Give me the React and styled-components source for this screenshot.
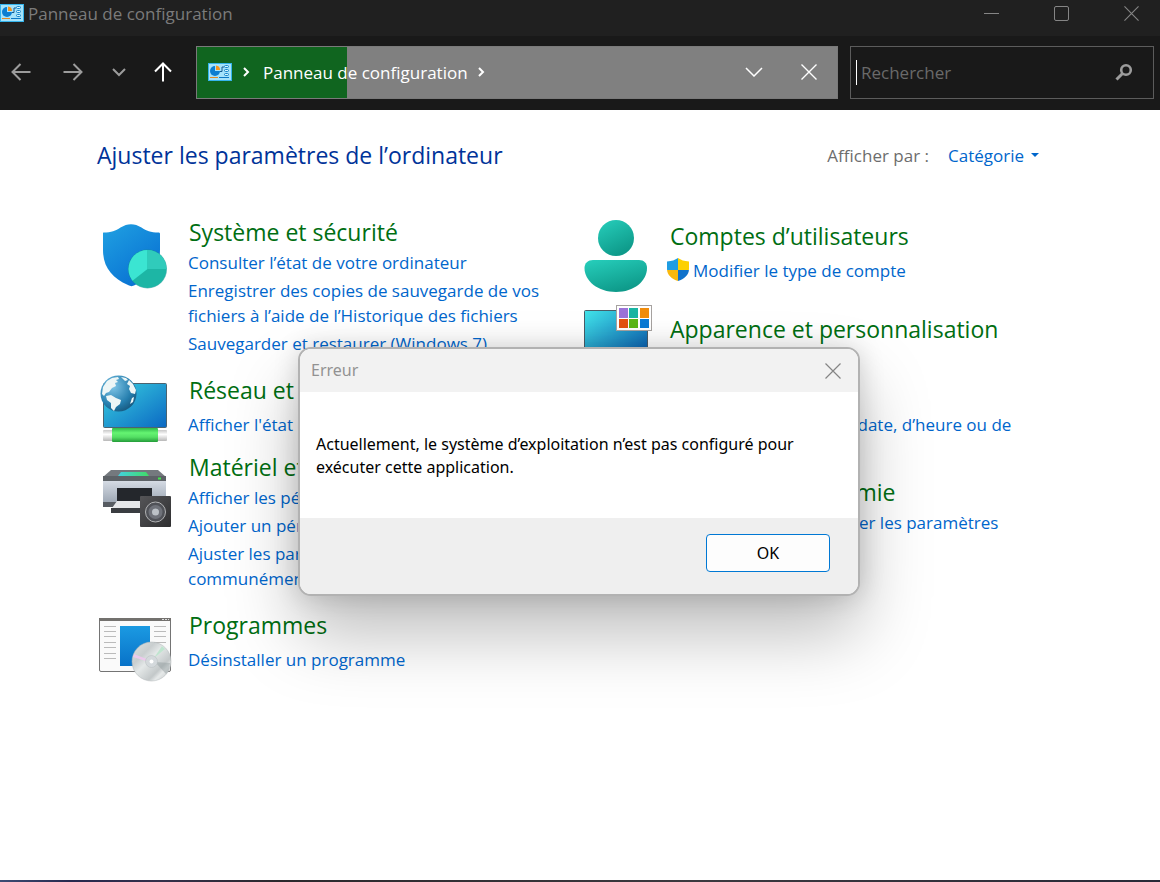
import React from "react";
import styled, { createGlobalStyle } from "styled-components";

const GlobalStyle = createGlobalStyle`
  * { box-sizing: border-box; }
  body {
    margin: 0;
    background: #fff;
    font-family: "Open Sans", "Noto Sans", sans-serif;
    font-size: 17px;
    line-height: 25px;
  }
  button { font: inherit; padding: 0; border: 0; background: none; color: inherit; cursor: pointer; }
  h1, h2, p, ul { margin: 0; padding: 0; font-weight: 400; }
  svg { display: block; flex: none; }
`;

const Window = styled.div`
  position: relative;
  display: flex;
  flex-direction: column;
  min-height: 100vh;
`;

const TitleBar = styled.header`
  display: flex;
  align-items: flex-start;
  height: 36px;
  padding-top: 1px;
  background: #202020;
  color: #7b7b7b;
  svg { margin-top: 3px; }
`;

const WindowTitle = styled.span`
  flex: 1;
  margin-left: 4px;
`;

const WindowButton = styled.button`
  display: flex;
  align-items: center;
  justify-content: center;
  width: 70px;
  height: 25px;
  &:last-child { width: 58px; margin-left: 6px; }
  svg { margin: 0; }
`;

const NavBar = styled.nav`
  display: flex;
  align-items: center;
  height: 74px;
  padding: 0 6px 2px 0;
  background: #191919;
  color: #fff;
`;

const NavButton = styled.button`
  display: flex;
  align-items: center;
  justify-content: center;
  width: ${(p) => p.$width}px;
  height: 40px;
  color: ${(p) => (p.$active ? "#fff" : "#9c9c9c")};
`;

const AddressBar = styled.div`
  display: flex;
  align-items: center;
  flex: 1;
  height: 53px;
  margin-left: 3px;
  padding: 0 8px 0 11px;
  border: 1px solid #7a7a7a;
  background: linear-gradient(to right, #10651f 150px, #808080 150px);
`;

const Crumb = styled.a`
  margin: 0 10px 0 13px;
  color: #fff;
  text-decoration: none;
`;

const Crumbs = styled.div`
  display: flex;
  align-items: center;
  flex: 1;
  > svg:first-child { margin-right: 11px; }
`;

const SearchBox = styled.label`
  display: flex;
  align-items: center;
  width: 304px;
  height: 53px;
  margin-left: 12px;
  padding: 0 20px 0 5px;
  border: 1px solid #5c5c5c;
`;

const Caret = styled.span`
  width: 1px;
  height: 25px;
  background: #fff;
`;

const SearchInput = styled.input`
  flex: 1;
  min-width: 0;
  padding: 0 0 0 4px;
  border: 0;
  outline: 0;
  background: transparent;
  color: #fff;
  font: inherit;
  &::placeholder { color: #6a6a6a; opacity: 1; }
`;

const Content = styled.main`
  flex: 1;
  padding: 29px 99px 60px;
`;

const ContentHeader = styled.div`
  display: flex;
  align-items: center;
  justify-content: space-between;
  height: 32px;
  margin: 0 22px 45px -2px;
`;

const PageTitle = styled.h1`
  color: #003399;
  font-size: 23px;
  line-height: 32px;
`;

const ViewBy = styled.div`
  display: flex;
  align-items: center;
  gap: 19px;
  color: #6d6d6d;
`;

const ViewButton = styled.button`
  display: flex;
  align-items: center;
  gap: 7px;
  color: #0066cc;
`;

const Columns = styled.div`
  display: grid;
  grid-template-columns: 1fr 1fr;
`;

const Category = styled.section`
  display: flex;
  gap: 18px;
  margin-bottom: ${(p) => p.$after}px;
`;

const IconSlot = styled.div`
  flex: none;
  width: 72px;
  padding-top: 1px;
`;

const CategoryText = styled.div`
  padding-top: ${(p) => p.$top || 0}px;
`;

const CategoryTitle = styled.h2`
  font-size: 23px;
  line-height: 32px;
  a { color: #006e12; text-decoration: none; }
`;

const TaskList = styled.ul`
  display: flex;
  flex-direction: column;
  gap: 3px;
  max-width: 360px;
  margin-top: ${(p) => (p.$loose ? 6 : 2)}px;
  margin-left: -1px;
  list-style: none;
`;

const Task = styled.li`
  display: flex;
  gap: 4px;
  margin-left: ${(p) => (p.$shield ? -2 : 0)}px;
  a { color: #0066cc; text-decoration: none; }
`;

const BottomEdge = styled.footer`
  height: 2px;
  background: linear-gradient(to right, #3c4c74, #27294f 6%, #33304a 14%, #2b292d 24%, #3b393f 60%, #292a38);
`;

const Dialog = styled.div`
  position: absolute;
  top: 347px;
  left: 50%;
  width: 562px;
  margin-left: -282px;
  border: 2px solid #b2b2b2;
  border-radius: 13px;
  background: #fff;
  background-clip: padding-box;
  overflow: hidden;
  box-shadow: 0 38px 70px rgba(0, 0, 0, 0.26), 0 0 26px rgba(0, 0, 0, 0.16);
  color: #000;
  font-family: "Noto Sans", "Open Sans", sans-serif;
  font-size: 16px;
  line-height: 23px;
`;

const DialogHeader = styled.div`
  display: flex;
  align-items: center;
  justify-content: space-between;
  height: 43px;
  padding: 0 17px 0 11px;
  background: #f2f2f2;
  color: #929292;
`;

const DialogBody = styled.p`
  padding: 41px 16px 39px;
`;

const DialogFooter = styled.div`
  display: flex;
  justify-content: flex-end;
  height: 76px;
  padding: 16px 28px 22px;
  background: #efefef;
`;

const OkButton = styled.button`
  width: 124px;
  height: 38px;
  border: 1px solid #0078d4;
  border-radius: 4px;
  background: #fdfdfd;
`;

const PanelIcon = () => (
  <svg width="24" height="18" viewBox="0 0 24 18">
    <rect width="24" height="18" fill="#35b4ec" />
    <rect x="1" y="1" width="22" height="16" fill="#a5e3fb" />
    <circle cx="7" cy="8" r="5" fill="#0c7ed0" />
    <path d="M7 8V2h1a5 5 0 0 1 5 6z" fill="#a5e3fb" />
    <path d="M8 2.500a4.500 4.500 0 0 1 4 4.500H8z" fill="#f7941d" />
    <path d="M12 8.500h2V4h2" fill="none" stroke="#14598f" />
    <g fill="#d7f6ff" stroke="#1483c9">
      <rect x="16.500" y="2.500" width="4" height="2" rx="1" />
      <rect x="16.500" y="6.500" width="4" height="2" rx="1" />
      <rect x="16.500" y="10.500" width="4" height="2" rx="1" />
    </g>
    <path d="M2 14.500h8" stroke="#e28a24" />
    <path d="M11 14.500h10" stroke="#0c78c4" />
  </svg>
);

const Cross = ({ size = 16, color = "currentColor", width = 1.2 }) => (
  <svg width={size} height={size} viewBox="0 0 16 16" stroke={color} strokeWidth={width}>
    <path d="M.5.5l15 15M15.500.5l-15 15" />
  </svg>
);

const Arrow = ({ turn = 0 }) => (
  <svg width="20" height="20" viewBox="0 0 20 20" fill="none" stroke="currentColor" strokeWidth="2">
    <path transform={`rotate(${turn} 10 10)`} d="M19.500 10H2M9.500 2L1.500 10l8 8" />
  </svg>
);

const CrumbChevron = () => (
  <svg width="7" height="10" viewBox="0 0 7 10" fill="none" stroke="#fff" strokeWidth="2">
    <path d="M1 1l4 4-4 4" />
  </svg>
);

const ShieldIcon = () => (
  <svg width="72" height="73" viewBox="0 1 72 73">
    <defs>
      <linearGradient id="sh" x2=".7" y2="1"><stop stopColor="#20a1e2" /><stop offset="1" stopColor="#0870d2" /></linearGradient>
      <clipPath id="pie"><circle cx="48.500" cy="53" r="19" /></clipPath>
    </defs>
    <path d="M4.500 16.500c8 0 12-1.500 17-5 7-4.500 14-4.500 21 0 5 3.500 9 5 17 5 1 0 1.500.5 1.500 1.500v16c0 17-10 28-25 35-3 1.500-4 1.500-7 0C13 62 4 51 4 34V18c0-1-.2-1.500.5-1.500z" fill="url(#sh)" />
    <circle cx="48.500" cy="53" r="19.500" fill="#168c90" opacity=".55" />
    <g clipPath="url(#pie)">
      <path d="M29 33h39v40H29z" fill="#1db6a5" />
      <path d="M48.500 53V33H28v36z" fill="#3be5d2" />
      <path d="M48.500 53V33H70v20z" fill="#30cbbb" />
    </g>
  </svg>
);

const NetworkIcon = () => (
  <svg width="72" height="69" viewBox="0 1 72 69">
    <defs>
      <linearGradient id="net" x2="1" y2="1"><stop stopColor="#39d0e0" /><stop offset="1" stopColor="#0b68c3" /></linearGradient>
      <radialGradient id="glb" cx=".35" cy=".3" r=".8"><stop stopColor="#80c6e7" /><stop offset=".65" stopColor="#257eae" /><stop offset="1" stopColor="#155277" /></radialGradient>
      <linearGradient id="tube" y2="1" x2="0"><stop stopColor="#31b94a" /><stop offset=".35" stopColor="#65f472" /><stop offset=".65" stopColor="#54df64" /><stop offset="1" stopColor="#249c39" /></linearGradient>
      <linearGradient id="cap" y2="1" x2="0"><stop stopColor="#c8c8c8" /><stop offset=".4" stopColor="#fff" /><stop offset="1" stopColor="#b8b8b8" /></linearGradient>
    </defs>
    <rect x="4.500" y="9.500" width="63" height="44" rx="1" fill="url(#net)" stroke="#4b6370" />
    <rect x="4" y="56" width="64" height="11" rx="1" fill="url(#cap)" />
    <rect x="13" y="54" width="46" height="14" rx="1" fill="url(#tube)" />
    <circle cx="19.500" cy="19.500" r="18" fill="url(#glb)" />
    <path d="M4 13l4-6 5-3 6-1 1 2-3 1 2 2-3 1 1 3-4 2-3 4-3 1-2 3-2-2zM22 3l5 1 2 2-3 1zM30 6l4 4 3 6-1 4-4-1-2-4 1-3-3-2zM7 22l5-1 5 3 5 2-1 4-4 3-2 4-3-3v-5l-4-3zM33 24l2-1-1 5-3 2z" fill="#edf6f6" />
  </svg>
);

const PrinterIcon = () => (
  <svg width="74" height="75" viewBox="0 1 74 75">
    <defs>
      <linearGradient id="prt" y2="1" x2="0"><stop stopColor="#d5dbe4" /><stop offset="1" stopColor="#9ca6b3" /></linearGradient>
      <linearGradient id="scan"><stop stopColor="#42d2df" /><stop offset="1" stopColor="#41db66" /></linearGradient>
      <linearGradient id="spk" x2="1" y2="1"><stop stopColor="#555558" /><stop offset="1" stopColor="#2e2e30" /></linearGradient>
    </defs>
    <path d="M12 19h47l8 7H4z" fill="#74797e" />
    <path d="M22 21h25l3 4H19z" fill="url(#scan)" />
    <path d="M4 25h63v5H4z" fill="#5d6267" />
    <path d="M4 30h63v22H4z" fill="url(#prt)" />
    <path d="M59 27.500h3" stroke="#41e84c" strokeWidth="2" />
    <path d="M4 51h49v5H4z" fill="#575c62" />
    <path d="M18 37h35v14H18z" fill="#24272c" />
    <path d="M18 50h29v7H13z" fill="#e5e7e9" />
    <path d="M12 57h29v5H12z" fill="#3a3d41" />
    <rect x="41" y="45" width="31" height="31" rx="1" fill="url(#spk)" />
    <circle cx="56.500" cy="61" r="10" fill="#505258" stroke="#b1b2b4" />
    <circle cx="56.500" cy="61" r="7" fill="#6f727a" />
    <circle cx="56.500" cy="61" r="3.500" fill="#bcc1c7" />
  </svg>
);

const ProgramsIcon = () => (
  <svg width="73" height="73" viewBox="0 1 73 73">
    <defs>
      <linearGradient id="pb" y2="1" x2="0"><stop stopColor="#1b9ae2" /><stop offset="1" stopColor="#0872c8" /></linearGradient>
      <linearGradient id="cd" x2="1" y2="1"><stop stopColor="#dfe4e4" /><stop offset=".3" stopColor="#c9cecf" /><stop offset=".45" stopColor="#e4e8e8" /><stop offset=".7" stopColor="#c3c8c9" /><stop offset=".78" stopColor="#e6e9e9" /><stop offset="1" stopColor="#bcc2c3" /></linearGradient>
    </defs>
    <rect x=".5" y="9.500" width="71" height="53" rx="1.500" fill="#fafafa" stroke="#747474" />
    <path d="M0 9h72v3H0z" fill="#73716e" />
    <path d="M63 10.500h2M66 10.500h2M69 10.500h1" stroke="#ddd" />
    <path d="M5 17.500h12M5 22.500h12M5 27.500h12M5 33.500h12M5 38.500h12M5 44.500h12M5 49.500h12M55 17.500h12M55 22.500h12M55 27.500h12M55 33.500h12" stroke="#bbb" />
    <rect x="21" y="17" width="30" height="40" fill="url(#pb)" />
    <circle cx="52.500" cy="52.500" r="19.500" fill="url(#cd)" stroke="#aeb5b6" strokeWidth=".5" />
    <path d="M50 51L35 45l-1 3 16 5z" fill="#f0c8ee" opacity=".9" />
    <path d="M55 49l11-9-3-3z" fill="#bfe5cf" />
    <path d="M56 53l15 1c0 5-2 9-4 11z" fill="#8f999b" opacity=".45" />
    <circle cx="52.500" cy="52.500" r="6" fill="#d4d9dc" stroke="#b5babc" strokeWidth=".5" />
    <circle cx="52.500" cy="52.500" r="2" fill="#fff" />
  </svg>
);

const UserIcon = () => (
  <svg width="72" height="75" viewBox="0 1 72 75">
    <defs>
      <linearGradient id="us" x2=".5" y2="1"><stop stopColor="#27cfbc" /><stop offset="1" stopColor="#0e9a8a" /></linearGradient>
    </defs>
    <circle cx="36" cy="22" r="18" fill="url(#us)" />
    <path d="M13 44h46c5 0 8 3 8 8 0 13-13 24-31 24S4.500 65 4.500 52c0-5 3.500-8 8.500-8z" fill="url(#us)" />
  </svg>
);

const AppearanceIcon = () => (
  <svg width="72" height="71" viewBox="0 1 72 71">
    <defs>
      <linearGradient id="ap" x2="1" y2="1"><stop stopColor="#42e5ea" /><stop offset="1" stopColor="#0753ab" /></linearGradient>
    </defs>
    <rect x="4.500" y="9.500" width="63" height="48" rx="1" fill="url(#ap)" stroke="#4a5d68" />
    <rect x="36.500" y="4.500" width="35" height="25" fill="#fff" stroke="#a6a2a0" />
    <rect x="39" y="7" width="9" height="10" fill="#9b73d8" />
    <rect x="49" y="7" width="9" height="10" fill="#19b5a3" />
    <rect x="60" y="7" width="9" height="10" fill="#f08c0c" />
    <rect x="39" y="18" width="9" height="9" fill="#e35212" />
    <rect x="49" y="18" width="9" height="9" fill="#5ab617" />
    <rect x="60" y="18" width="9" height="9" fill="#0879d4" />
  </svg>
);

const ClockIcon = () => (
  <svg width="72" height="72" viewBox="0 0 72 72" fill="none" stroke="#1d8fd6" strokeWidth="4">
    <circle cx="36" cy="36" r="28" fill="#eaf7fd" />
    <path d="M36 18v18l12 8" />
  </svg>
);

const AccessIcon = () => (
  <svg width="72" height="72" viewBox="0 0 72 72">
    <circle cx="36" cy="36" r="30" fill="#1580d4" />
    <path d="M20 28l32 0M36 20v22l-9 14M36 42l9 14" fill="none" stroke="#fff" strokeWidth="4" />
  </svg>
);

const UacShield = () => (
  <svg width="22" height="23" viewBox="0 0 22 23">
    <defs>
      <clipPath id="uac"><path d="M11 0c3 2 6 3.200 11 3.500V11c0 6-5 10-11 12C5 21 0 17 0 11V3.500C5 3.200 8 2 11 0z" /></clipPath>
    </defs>
    <g clipPath="url(#uac)">
      <path d="M0 0h11v12H0z" fill="#1f9de2" />
      <path d="M11 0h11v12H11z" fill="#fdd000" />
      <path d="M0 12h11v11H0z" fill="#fbb90c" />
      <path d="M11 12h11v11H11z" fill="#1072cb" />
    </g>
  </svg>
);

const LEFT = [
  { title: "Système et sécurité", Icon: ShieldIcon, after: 18, tasks: ["Consulter l’état de votre ordinateur", "Enregistrer des copies de sauvegarde de vos fichiers à l’aide de l’Historique des fichiers", "Sauvegarder et restaurer (Windows 7)"] },
  { title: "Réseau et Internet", Icon: NetworkIcon, after: 7, loose: true, tasks: ["Afficher l'état et la gestion du réseau"] },
  { title: "Matériel et audio", Icon: PrinterIcon, after: 18, tasks: ["Afficher les périphériques et imprimantes", "Ajouter un périphérique", "Ajuster les paramètres de mobilité communément utilisés"] },
  { title: "Programmes", Icon: ProgramsIcon, after: 0, loose: true, tasks: ["Désinstaller un programme"] },
];

const RIGHT = [
  { title: "Comptes d’utilisateurs", Icon: UserIcon, after: 9, top: 4, loose: true, shield: true, tasks: ["Modifier le type de compte"] },
  { title: "Apparence et personnalisation", Icon: AppearanceIcon, after: 1, top: 12, tasks: [] },
  { title: "Horloge et région", Icon: ClockIcon, after: 14, loose: true, tasks: ["Modifier les formats de date, d’heure ou de nombre"] },
  { title: "Options d’ergonomie", Icon: AccessIcon, after: 0, tasks: ["Laisser Windows suggérer les paramètres"] },
];

const CategoryColumn = ({ items }) => (
  <div>
    {items.map(({ title, Icon, after, top, loose, shield, tasks }) => (
      <Category key={title} $after={after}>
        <IconSlot><Icon /></IconSlot>
        <CategoryText $top={top}>
          <CategoryTitle><a href="#category">{title}</a></CategoryTitle>
          {tasks.length > 0 && (
            <TaskList $loose={loose}>
              {tasks.map((task) => (
                <Task key={task} $shield={shield}>
                  {shield && <UacShield />}
                  <a href="#task">{task}</a>
                </Task>
              ))}
            </TaskList>
          )}
        </CategoryText>
      </Category>
    ))}
  </div>
);

export default function App() {
  return (
    <>
      <GlobalStyle />
      <Window>
        <TitleBar>
          <PanelIcon />
          <WindowTitle>Panneau de configuration</WindowTitle>
          <WindowButton aria-label="Réduire">
            <svg width="15" height="15" viewBox="0 0 15 15" stroke="#858585"><path d="M0 7.500h15" /></svg>
          </WindowButton>
          <WindowButton aria-label="Agrandir">
            <svg width="15" height="15" viewBox="0 0 15 15" stroke="#858585" fill="none"><rect x=".5" y=".5" width="14" height="14" rx="1.500" /></svg>
          </WindowButton>
          <WindowButton aria-label="Fermer"><Cross size={15} color="#858585" /></WindowButton>
        </TitleBar>

        <NavBar>
          <NavButton $width={41} aria-label="Précédent"><Arrow /></NavButton>
          <NavButton $width={64} aria-label="Suivant"><Arrow turn={180} /></NavButton>
          <NavButton $width={27} aria-label="Emplacements récents">
            <svg width="14" height="9" viewBox="0 0 14 9" fill="none" stroke="currentColor" strokeWidth="2"><path d="M1 1l6 6 6-6" /></svg>
          </NavButton>
          <NavButton $width={61} $active aria-label="Dossier parent">
            <Arrow turn={90} />
          </NavButton>
          <AddressBar>
            <Crumbs>
              <PanelIcon />
              <CrumbChevron />
              <Crumb href="#panel">Panneau de configuration</Crumb>
              <CrumbChevron />
            </Crumbs>
            <NavButton $width={70} $active aria-label="Historique">
              <svg width="18" height="10" viewBox="0 0 18 10" fill="none" stroke="currentColor" strokeWidth="1.500"><path d="M1 1l8 8 8-8" /></svg>
            </NavButton>
            <NavButton $width={40} $active aria-label="Arrêter"><Cross width={1.4} /></NavButton>
          </AddressBar>
          <SearchBox>
            <Caret />
            <SearchInput type="text" placeholder="Rechercher" aria-label="Rechercher" />
            <svg width="18" height="18" viewBox="0 0 18 18" fill="none" stroke="#9c9c9c">
              <circle cx="11" cy="7" r="4.800" strokeWidth="2.600" />
              <path d="M7.500 10.500L1.500 16.500" strokeWidth="3" />
            </svg>
          </SearchBox>
        </NavBar>

        <Content>
          <ContentHeader>
            <PageTitle>Ajuster les paramètres de l’ordinateur</PageTitle>
            <ViewBy>
              <span>Afficher par :</span>
              <ViewButton>
                Catégorie
                <svg width="8" height="4" viewBox="0 0 8 4" fill="#0066cc"><path d="M0 0h8L4 4z" /></svg>
              </ViewButton>
            </ViewBy>
          </ContentHeader>
          <Columns>
            <CategoryColumn items={LEFT} />
            <CategoryColumn items={RIGHT} />
          </Columns>
        </Content>
        <BottomEdge />

        <Dialog role="dialog" aria-label="Erreur">
          <DialogHeader>
            <span>Erreur</span>
            <button aria-label="Fermer"><Cross color="#858585" /></button>
          </DialogHeader>
          <DialogBody>Actuellement, le système d’exploitation n’est pas configuré pour exécuter cette application.</DialogBody>
          <DialogFooter><OkButton>OK</OkButton></DialogFooter>
        </Dialog>
      </Window>
    </>
  );
}
